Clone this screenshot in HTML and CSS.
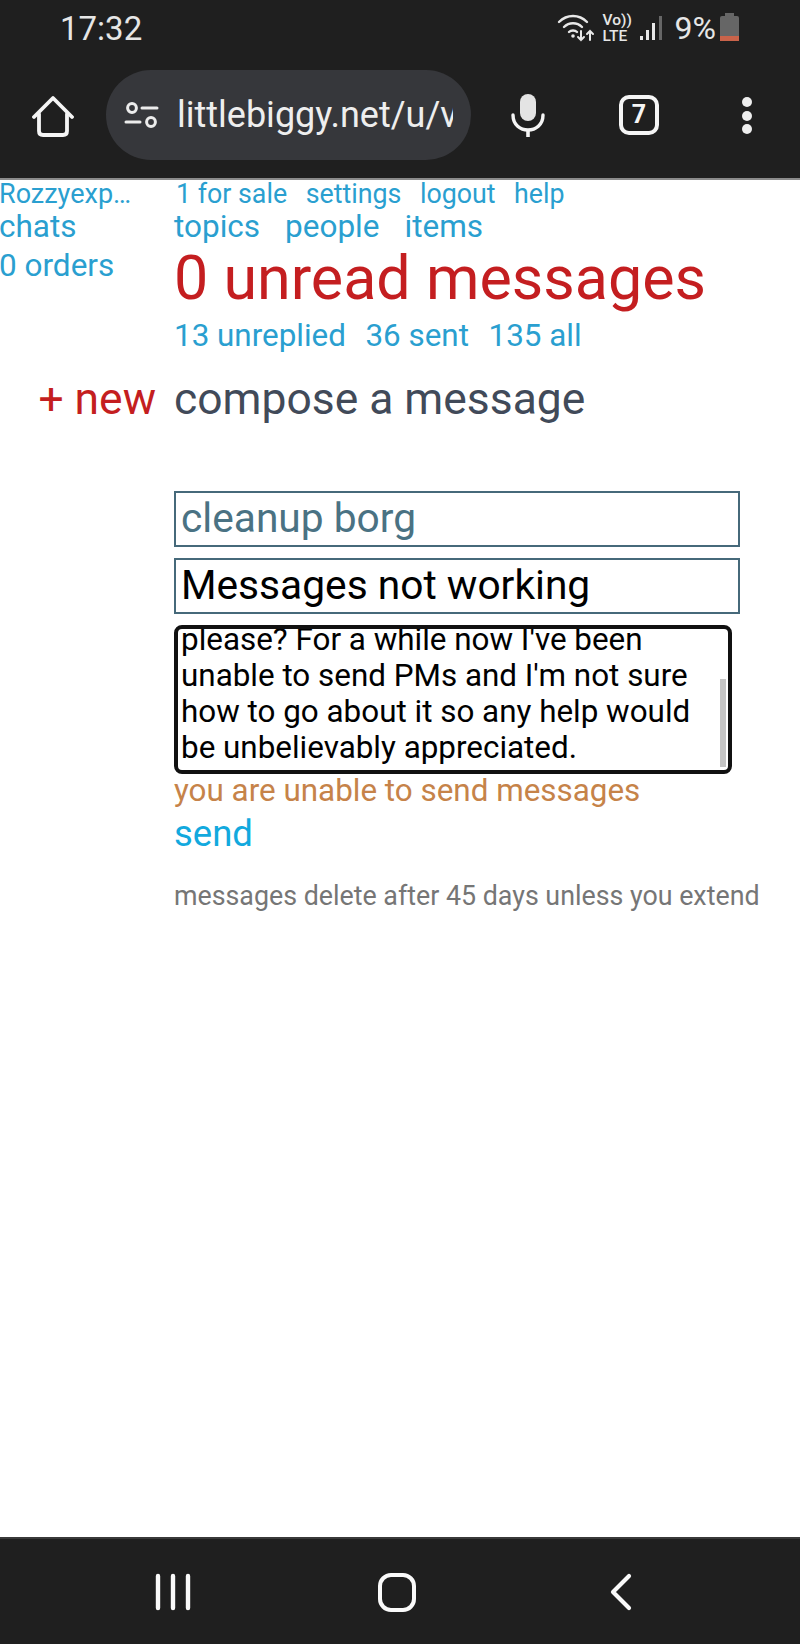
FILE: index.html
```html
<!DOCTYPE html>
<html lang="en">

<head>
    <meta charset="UTF-8">
    <meta name="viewport" content="width=device-width, initial-scale=1.0">
    <title>compose a message</title>
    <link rel="stylesheet" href="styles.css">
</head>

<body>
    <div class="phone">
        <header class="chrome">
            <div class="status-bar">
                <span class="clock">17:32</span>
                <div class="status-icons">
                    <svg class="icon-wifi" width="38" height="30" viewBox="0 0 38 30" fill="none" stroke="#e8e8e8" stroke-linecap="round">
                        <path d="M2 9C10 1 22 1 30 9" stroke-width="2.4"/>
                        <path d="M7 14C12 9 20 9 25 14" stroke-width="2.4"/>
                        <path d="M12 19C14 17 18 17 20 19" stroke-width="2.4"/>
                        <circle cx="16" cy="23" r="1.8" fill="#e8e8e8" stroke="none"/>
                        <path d="M24 18V27M21 24L24 27L27 24" stroke-width="2"/>
                        <path d="M33 27V18M30 21L33 18L36 21" stroke-width="2"/>
                    </svg>
                    <div class="volte"><span>Vo))</span><span>LTE</span></div>
                    <svg class="icon-signal" width="24" height="26" viewBox="0 0 24 26">
                        <rect x="1" y="21" width="3" height="4" fill="#e8e8e8"/>
                        <rect x="7" y="15" width="3" height="10" fill="#e8e8e8"/>
                        <rect x="13" y="8" width="3" height="17" fill="#e8e8e8"/>
                        <rect x="20" y="1" width="3" height="24" fill="#666"/>
                    </svg>
                    <span class="battery-text">9%</span>
                    <div class="battery"><div class="battery-level"></div></div>
                </div>
            </div>
            <div class="toolbar">
                <svg class="icon-home" width="42" height="42" viewBox="0 0 42 42" fill="none" stroke="#f5f5f5" stroke-width="3.8" stroke-linejoin="round" stroke-linecap="round">
                    <path d="M2 22L21 3L40 22"/>
                    <path d="M7 19V36Q7 40 11 40H31Q35 40 35 36V19"/>
                </svg>
                <div class="url-pill">
                    <svg class="icon-tune" width="36" height="28" viewBox="0 0 36 28" fill="none" stroke="#ececec" stroke-width="3" stroke-linecap="round">
                        <circle cx="8" cy="7" r="4.4"/>
                        <path d="M18 7H33"/>
                        <circle cx="27" cy="21" r="4.4"/>
                        <path d="M2 21H16"/>
                    </svg>
                    <span class="url-text">littlebiggy.net/u/v</span>
                </div>
                <svg class="icon-mic" width="34" height="46" viewBox="0 0 34 46" fill="none">
                    <rect x="9" y="1" width="16" height="27" rx="8" fill="#e4e4e4"/>
                    <path d="M2 22C2 42 32 42 32 22" stroke="#f5f5f5" stroke-width="3.4" stroke-linecap="round"/>
                    <path d="M17 36V44" stroke="#f5f5f5" stroke-width="3.6"/>
                </svg>
                <div class="tab-count">7</div>
                <div class="menu-dots"><i></i><i></i><i></i></div>
            </div>
        </header>

        <main class="page">
            <aside class="sidebar">
                <a class="user-name">Rozzyexp…</a>
                <a class="side-link">chats</a>
                <a class="side-link orders">0 orders</a>
            </aside>
            <div class="content">
                <nav class="top-links">
                    <a>1 for sale</a>
                    <a>settings</a>
                    <a>logout</a>
                    <a>help</a>
                </nav>
                <nav class="main-links">
                    <a>topics</a>
                    <a>people</a>
                    <a>items</a>
                </nav>
                <h1 class="unread">0 unread messages</h1>
                <nav class="message-links">
                    <a>13 unreplied</a>
                    <a>36 sent</a>
                    <a>135 all</a>
                </nav>
                <div class="compose-row">
                    <a class="new-link">+ new</a>
                    <h2 class="compose-title">compose a message</h2>
                </div>
                <form class="compose-form">
                    <div class="field to-field">cleanup borg</div>
                    <div class="field subject-field">Messages not working</div>
                    <div class="message-box">
                        <p>please? For a while now I've been<br>unable to send PMs and I'm not sure<br>how to go about it so any help would<br>be unbelievably appreciated.</p>
                        <div class="scroll-thumb"></div>
                    </div>
                    <p class="warning">you are unable to send messages</p>
                    <a class="send-link">send</a>
                    <p class="note">messages delete after 45 days unless you extend</p>
                </form>
            </div>
        </main>

        <footer class="nav-bar">
            <svg class="nav-recent" width="38" height="38" viewBox="0 0 38 38" stroke="#fafafa" stroke-width="4.4" stroke-linecap="round">
                <path d="M4 3V35M19 3V35M34 3V35"/>
            </svg>
            <svg class="nav-home" width="40" height="40" viewBox="0 0 40 40" fill="none" stroke="#fafafa" stroke-width="4">
                <rect x="3" y="3" width="34" height="35" rx="11"/>
            </svg>
            <svg class="nav-back" width="24" height="38" viewBox="0 0 24 38" fill="none" stroke="#fafafa" stroke-width="4.2" stroke-linecap="round" stroke-linejoin="round">
                <path d="M20 3L4 19L20 35"/>
            </svg>
        </footer>
    </div>
</body>

</html>
```

FILE: styles.css
```css
* {
    box-sizing: border-box;
}

html, body {
    margin: 0;
    background-color: #fff;
}

body {
    font-family: Roboto, 'Liberation Sans', sans-serif;
}

.phone {
    width: 800px;
    height: 1644px;
    display: flex;
    flex-direction: column;
    overflow: hidden;
}

/* browser top */
.chrome {
    background-color: #1f1f1f;
    height: 180px;
    border-bottom: 2px solid #8b8b8b;
    flex-shrink: 0;
}

.status-bar {
    height: 66px;
    display: flex;
    justify-content: space-between;
    align-items: center;
    padding: 0 61px 10px 60px;
    color: #e6e6e6;
}

.clock {
    font-size: 33px;
}

.status-icons {
    display: flex;
    align-items: center;
    gap: 10px;
}

.icon-wifi {
    margin-right: -2px;
}

.volte {
    display: flex;
    flex-direction: column;
    font-size: 15.5px;
    line-height: 16px;
    font-weight: 500;
    width: 27px;
    margin-right: -1px;
}

.battery-text {
    font-size: 32px;
    margin-left: 2px;
}

.battery {
    width: 19px;
    height: 25px;
    margin-left: -6px;
    background-color: #666;
    border-radius: 2px;
    position: relative;
    display: flex;
    align-items: flex-end;
}

.battery::before {
    content: "";
    position: absolute;
    top: -3px;
    left: 5px;
    width: 9px;
    height: 3px;
    background-color: #666;
}

.battery-level {
    width: 100%;
    height: 5px;
    background-color: #c9634a;
}

.toolbar {
    height: 112px;
    display: flex;
    align-items: flex-start;
    padding-left: 32px;
    padding-top: 4px;
}

.icon-home {
    margin-top: 25px;
}

.url-pill {
    width: 365px;
    height: 90px;
    margin-left: 32px;
    border-radius: 45px;
    background-color: #36373b;
    display: flex;
    align-items: center;
    padding-left: 18px;
}

.icon-tune {
    flex-shrink: 0;
}

.url-text {
    width: 276px;
    margin-left: 17px;
    font-size: 36px;
    color: #eee;
    overflow: hidden;
    white-space: nowrap;
}

.icon-mic {
    margin: 23px 0 0 40px;
}

.tab-count {
    width: 40px;
    height: 40px;
    margin: 25px 0 0 74px;
    border: 4px solid #f5f5f5;
    border-radius: 10px;
    color: #f5f5f5;
    font-size: 25px;
    font-weight: 700;
    text-align: center;
    line-height: 32px;
}

.menu-dots {
    margin: 27px 0 0 83px;
    display: flex;
    flex-direction: column;
    gap: 3.5px;
}

.menu-dots i {
    display: block;
    width: 10px;
    height: 10px;
    border-radius: 50%;
    background-color: #eee;
}

/* page */
.page {
    flex: 1;
    display: flex;
    background-color: #fff;
}

.sidebar {
    width: 175px;
    margin-left: -1px;
    flex-shrink: 0;
    display: flex;
    flex-direction: column;
    color: #2a9fd0;
}

.user-name {
    font-size: 27px;
    line-height: 26px;
    padding-top: 1px;
}

.side-link {
    font-size: 31.5px;
    line-height: 40px;
}

.orders {
    margin-top: -1px;
}

.content {
    flex: 1;
    min-width: 0;
    color: #2a9fd0;
}

.top-links {
    display: flex;
    gap: 18.5px;
    font-size: 26.8px;
    line-height: 26px;
    padding: 1px 0 0 2px;
}

.main-links {
    display: flex;
    gap: 25px;
    font-size: 31.5px;
    line-height: 40px;
}

.unread {
    margin: -4px 0 0;
    font-size: 61px;
    font-weight: 400;
    line-height: 70px;
    color: #c41e20;
}

.message-links {
    display: flex;
    gap: 19.5px;
    font-size: 31.4px;
    line-height: 40px;
    margin-top: 3px;
}

.compose-row {
    position: relative;
    margin-top: 18px;
}

.new-link {
    position: absolute;
    right: 100%;
    margin-right: 18px;
    top: 0;
    white-space: nowrap;
    font-size: 44.4px;
    line-height: 50px;
    color: #c41e20;
}

.compose-title {
    margin: 0;
    font-size: 44.4px;
    font-weight: 400;
    line-height: 50px;
    color: #414a59;
}

.compose-form {
    margin-top: 67px;
}

.field {
    width: 566px;
    height: 56px;
    border: 2px solid #46697a;
    padding-left: 5px;
    font-size: 40.7px;
    line-height: 51px;
    margin-bottom: 11px;
}

.to-field {
    color: #4a7283;
}

.subject-field {
    color: #000;
}

.message-box {
    position: relative;
    width: 558px;
    height: 149px;
    border: 4px solid #111;
    border-radius: 8px;
    padding-left: 3px;
    display: flex;
    flex-direction: column;
    justify-content: flex-end;
    overflow: hidden;
    color: #000;
    font-size: 31.4px;
    line-height: 36px;
}

.message-box p {
    margin: 0 0 4px;
}

.scroll-thumb {
    position: absolute;
    right: 2px;
    bottom: 3px;
    width: 6px;
    height: 88px;
    background-color: #c4c4c4;
}

.warning {
    margin: -3px 0 0;
    font-size: 31.4px;
    line-height: 40px;
    color: #c68349;
}

.send-link {
    display: block;
    font-size: 36.5px;
    line-height: 44px;
    color: #12a9de;
    margin-top: 1px;
}

.note {
    margin: 24px 0 0;
    font-size: 26.8px;
    line-height: 32px;
    color: #767676;
    white-space: nowrap;
}

/* android nav */
.nav-bar {
    height: 107px;
    flex-shrink: 0;
    background-color: #1f1f1f;
    border-top: 2px solid #3a3a3a;
    display: flex;
    align-items: center;
    padding-left: 154px;
}

.nav-home {
    margin-left: 185px;
}

.nav-back {
    margin-left: 192px;
}
```
